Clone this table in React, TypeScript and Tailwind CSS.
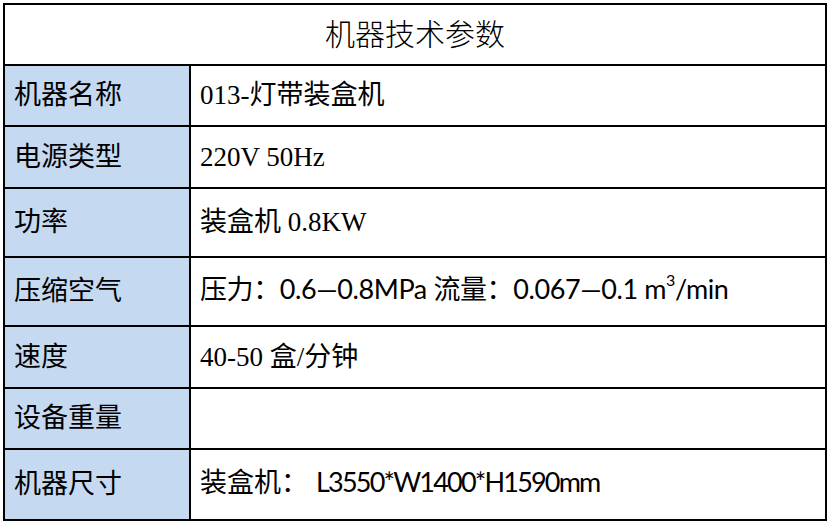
const song = '[font-family:"Liberation_Serif","Noto_Sans_CJK_SC",serif]';
const sans = '[font-family:"Lato","Noto_Sans_CJK_SC",sans-serif]';

type Row = { label: string; h: string; value: React.ReactNode; cls?: string };

const rows: Row[] = [
  { label: '机器名称', h: 'h-[61px]', value: '013-灯带装盒机' },
  { label: '电源类型', h: 'h-[62px]', value: '220V 50Hz' },
  { label: '功率', h: 'h-[69px]', value: '装盒机 0.8KW' },
  {
    label: '压缩空气',
    h: 'h-[69px]',
    cls: `${sans} tracking-[-0.4px] pb-[4px]`,
    value: (
      <>
        压力：0.6—0.8MPa 流量：0.067—0.1 m<span className="relative -top-[10px] text-[16px]">3</span>/min
      </>
    ),
  },
  { label: '速度', h: 'h-[62px]', value: '40-50 盒/分钟' },
  { label: '设备重量', h: 'h-[61px]', value: '' },
  {
    label: '机器尺寸',
    h: 'h-[71px]',
    cls: `${sans} pb-[5px]`,
    value: (
      <>
        装盒机：<span className="ml-[8px] tracking-[-1.8px]">L3550*W1400*H1590mm</span>
      </>
    ),
  },
];

export default function App() {
  return (
    <div className="w-[830px] h-[524px] bg-white pl-[3px] pt-[3px]">
      <div className="w-[824px] border-2 border-black text-[27px] text-black">
        <div className={`h-[59px] flex items-center justify-center text-[30px] font-light ${song}`}>
          机器技术参数
        </div>
        {rows.map((r) => (
          <div key={r.label} className={`grid grid-cols-[186px_1fr] border-t-2 border-black ${r.h}`}>
            <div className={`bg-[#c5d9f1] border-r-2 border-black flex items-center pl-[9px] ${song}`}>
              {r.label}
            </div>
            <div className={`flex items-center pl-[9px] whitespace-nowrap ${r.cls ?? song}`}>{r.value}</div>
          </div>
        ))}
      </div>
    </div>
  );
}
